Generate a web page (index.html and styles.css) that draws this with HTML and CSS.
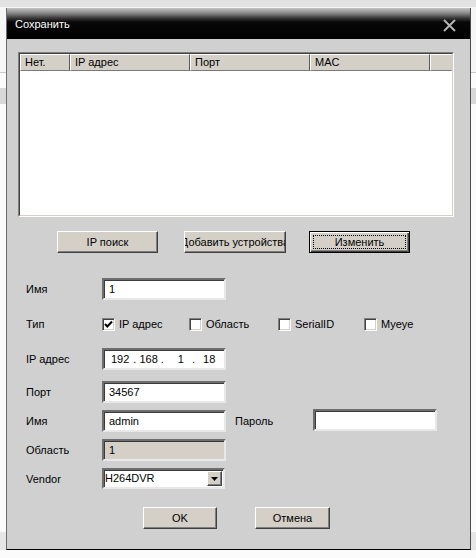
FILE: index.html
```html
<!DOCTYPE html>
<html lang="ru">
<head>
<meta charset="utf-8">
<title>Сохранить</title>
<link rel="stylesheet" href="styles.css">
</head>
<body>
<div class="dialog">
  <div class="titlebar">
    <span class="title">Сохранить</span>
    <svg class="close" width="13" height="13" viewBox="0 0 13 13"><path d="M1 1 L12 12 M12 1 L1 12" stroke="#b4b4b4" stroke-width="2" fill="none"/></svg>
  </div>
  <div class="content">
    <div class="list">
      <div class="list-inner">
        <div class="list-head">
          <div class="hcell c1">Нет.</div>
          <div class="hcell c2">IP адрес</div>
          <div class="hcell c3">Порт</div>
          <div class="hcell c4">MAC</div>
          <div class="hcell c5"></div>
        </div>
      </div>
    </div>

    <div class="btn-row">
      <div class="btn b-search"><span>IP поиск</span></div>
      <div class="btn b-add"><span>Добавить устройства</span></div>
      <div class="btn b-edit focused"><div class="focus-rect"><span>Изменить</span></div></div>
    </div>

    <div class="form">
      <div class="row r-name">
        <div class="label">Имя</div>
        <div class="field">1</div>
      </div>
      <div class="row r-type">
        <div class="label">Тип</div>
        <div class="check i1"><span class="box"><svg width="9" height="9" viewBox="0 0 9 9"><path d="M1 4 L3.3 6.5 L8 1.5" stroke="#000" stroke-width="2" fill="none"/></svg></span>IP адрес</div>
        <div class="check i2"><span class="box"></span>Область</div>
        <div class="check i3"><span class="box"></span>SerialID</div>
        <div class="check i4"><span class="box"></span>Myeye</div>
      </div>
      <div class="row r-ip">
        <div class="label">IP адрес</div>
        <div class="field ip">
          <span class="oct o1">192</span><span class="dot d1">.</span><span class="oct o2">168</span><span class="dot d2">.</span><span class="oct o3">1</span><span class="dot d3">.</span><span class="oct o4">18</span>
        </div>
      </div>
      <div class="row r-port">
        <div class="label">Порт</div>
        <div class="field">34567</div>
      </div>
      <div class="row r-user">
        <div class="label">Имя</div>
        <div class="field">admin</div>
        <div class="label pass-label">Пароль</div>
        <div class="field pass"></div>
      </div>
      <div class="row r-area">
        <div class="label">Область</div>
        <div class="field disabled">1</div>
      </div>
      <div class="row r-vendor">
        <div class="label">Vendor</div>
        <div class="select">
          <span class="sel-text">H264DVR</span>
          <span class="sel-btn"><svg width="7" height="4" viewBox="0 0 7 4"><path d="M0 0 H7 L3.5 4 Z" fill="#000"/></svg></span>
        </div>
      </div>
    </div>

    <div class="ok-row">
      <div class="btn b-ok"><span>OK</span></div>
      <div class="btn b-cancel"><span>Отмена</span></div>
    </div>
  </div>
</div>
</body>
</html>
```

FILE: styles.css
```css
* { box-sizing: border-box; }

html, body {
  margin: 0;
  padding: 0;
}

body {
  width: 476px;
  height: 558px;
  overflow: hidden;
  font-family: "Liberation Sans", Arial, sans-serif;
  font-size: 11px;
  color: #000;
  background: linear-gradient(to bottom,
    #e2e2e2 0, #e2e2e2 7px,
    #f6f6f6 7px, #f6f6f6 72px,
    #c8c8c8 72px, #c8c8c8 73px,
    #fbfbfb 73px, #fbfbfb 88px,
    #d8d8d8 88px, #d8d8d8 104px,
    #fbfbfb 104px, #fbfbfb 532px,
    #e6e6e6 532px, #e6e6e6 550px,
    #fbfbfb 550px);
}

.dialog {
  margin: 8px 0 0 6px;
  width: 465px;
  height: 542px;
  background: #d0d0d0;
  border-left: 1px solid #6c6c6c;
  border-right: 1px solid #4c4c4c;
  border-bottom: 1px solid #000;
  display: flex;
  flex-direction: column;
}

.titlebar {
  height: 31px;
  flex: none;
  display: flex;
  align-items: center;
  justify-content: space-between;
  padding: 0 14px 0 8px;
  background: linear-gradient(to bottom, #c4c4c4 0, #8a8a8a 5px, #3a3a3a 10px, #080808 14px, #000 100%);
  color: #fff;
}

.title {
  font-size: 11px;
  margin-top: 1px;
}

.close { display: block; margin-top: 3px; }

.content {
  padding: 13px 0 0 11px;
}

/* list */
.list {
  width: 436px;
  height: 165px;
  border: 1px solid;
  border-color: #808080 #ffffff #ffffff #808080;
}

.list-inner {
  height: 100%;
  border: 1px solid;
  border-color: #404040 #d4d0c8 #d4d0c8 #404040;
  background: #fff;
}

.list-head {
  display: flex;
  height: 17px;
}

.hcell {
  height: 17px;
  background: #d4d0c8;
  border: 1px solid;
  border-color: #ffffff #5a5a5a #7a7a7a #ffffff;
  padding-left: 4px;
  line-height: 15px;
  white-space: nowrap;
}

.c1 { width: 50px; }
.c2 { width: 120px; }
.c3 { width: 120px; }
.c4 { width: 120px; }
.c5 { flex: 1; border-right-color: #d4d0c8; }

/* buttons */
.btn {
  height: 22px;
  background: #d4d0c8;
  border: 1px solid;
  border-color: #ffffff #404040 #404040 #ffffff;
  box-shadow: inset -1px -1px 0 #808080;
  display: flex;
  align-items: center;
  justify-content: center;
  overflow: hidden;
  white-space: nowrap;
}

.btn-row {
  display: flex;
  margin-top: 14px;
}

.b-search { width: 101px; margin-left: 39px; }
.b-add { width: 102px; margin-left: 26px; }
.b-edit { width: 101px; margin-left: 23px; }

.focused {
  border: 1px solid #000;
  box-shadow: inset 1px 1px 0 #fff, inset -1px -1px 0 #404040, inset -2px -2px 0 #808080;
  padding: 3px;
}

.focus-rect {
  width: 100%;
  height: 100%;
  border: 1px dotted #000;
  display: flex;
  align-items: center;
  justify-content: center;
}

/* form */
.form {
  margin-top: 25px;
  padding-left: 8px;
}

.row {
  display: flex;
  align-items: center;
  height: 22px;
}

.label {
  width: 76px;
  flex: none;
  white-space: nowrap;
}

.field {
  width: 124px;
  height: 22px;
  flex: none;
  background: #fff;
  border: 2px solid;
  border-color: #6e6e6e #e8e8e8 #e8e8e8 #6e6e6e;
  box-shadow: inset 1px 1px 0 #3a3a3a;
  padding: 0 0 0 5px;
  line-height: 18px;
  white-space: nowrap;
}

.field.disabled {
  background: #d4d0c8;
}

.r-type { margin-top: 13px; }
.r-ip { margin-top: 13px; }
.r-port { margin-top: 11px; }
.r-user { margin-top: 7px; }
.r-area { margin-top: 7px; }
.r-vendor { margin-top: 7px; height: 21px; }

.check {
  display: flex;
  align-items: center;
  flex: none;
  white-space: nowrap;
}

.i1 { width: 87px; }
.i2 { width: 89px; }
.i3 { width: 86px; }

.box {
  width: 13px;
  height: 13px;
  margin-right: 4px;
  background: #fff;
  border: 1px solid;
  border-color: #808080 #ffffff #ffffff #808080;
  box-shadow: inset 1px 1px 0 #404040, inset -1px -1px 0 #d4d0c8;
  display: flex;
  align-items: center;
  justify-content: center;
}

.box svg { display: block; }

.ip {
  display: flex;
  padding-left: 0;
}

.oct, .dot { display: block; }
.o1 { margin-left: 7px; }
.d1 { margin-left: 4px; }
.o2 { margin-left: 3px; }
.d2 { margin-left: 3px; }
.o3 { margin-left: 14px; }
.d3 { margin-left: 8px; }
.o4 { margin-left: 8px; }

.pass-label {
  margin-left: 9px;
  width: 78px;
}

.pass {
  margin-top: -3px;
}

.select {
  width: 123px;
  height: 21px;
  background: #fff;
  border: 2px solid;
  border-color: #6e6e6e #e8e8e8 #e8e8e8 #6e6e6e;
  box-shadow: inset 1px 1px 0 #3a3a3a;
  display: flex;
  align-items: center;
  justify-content: space-between;
  padding: 1px 1px 1px 1px;
}

.sel-text {
  padding-left: 0;
  line-height: 15px;
}

.sel-btn {
  width: 15px;
  height: 15px;
  background: #d4d0c8;
  border: 1px solid;
  border-color: #ffffff #404040 #404040 #ffffff;
  box-shadow: inset -1px -1px 0 #808080;
  display: flex;
  align-items: center;
  justify-content: center;
}

.sel-btn svg { display: block; }

/* ok row */
.ok-row {
  display: flex;
  margin-top: 18px;
}

.b-ok { width: 74px; margin-left: 125px; }
.b-cancel { width: 75px; margin-left: 38px; }
```
